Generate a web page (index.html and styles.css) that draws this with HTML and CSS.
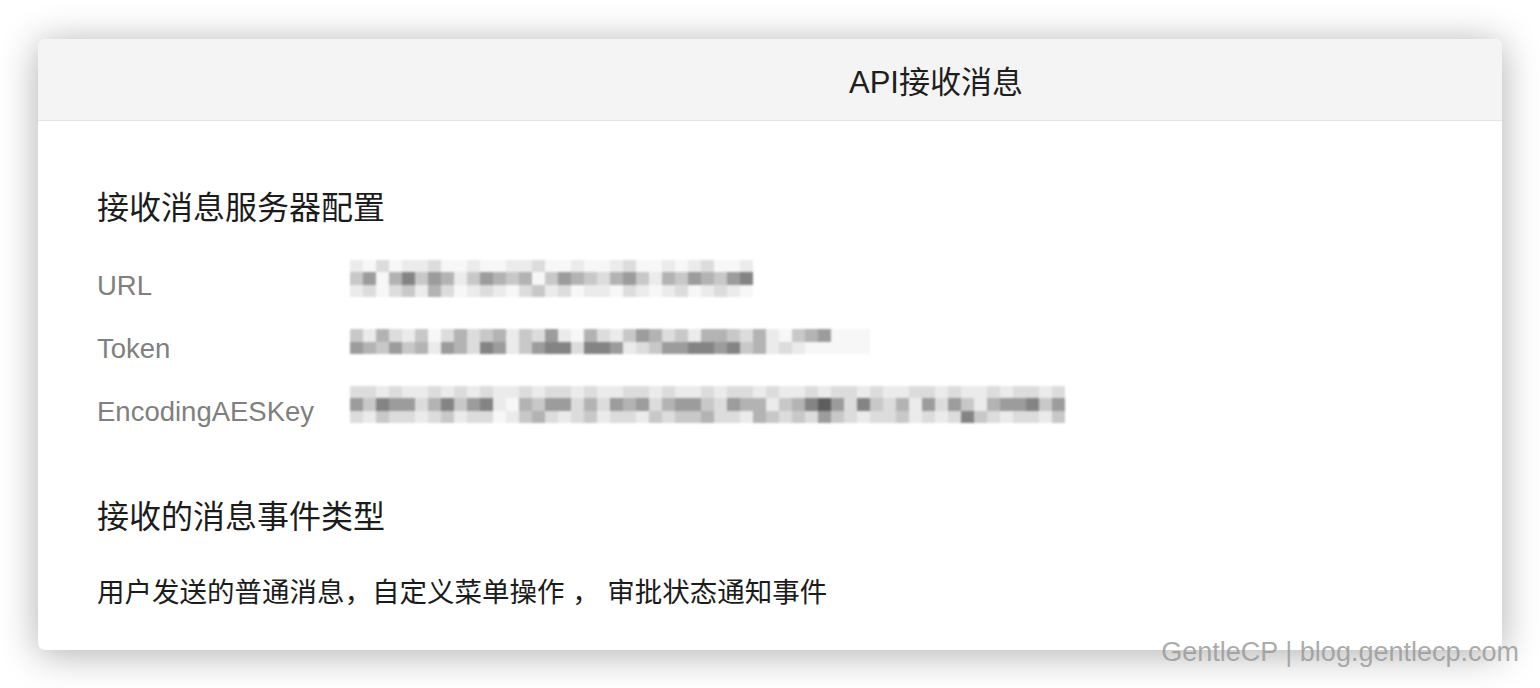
FILE: index.html
```html
<!DOCTYPE html>
<html lang="zh-CN">
<head>
<meta charset="utf-8">
<title>API接收消息</title>
<link rel="stylesheet" href="styles.css">
</head>
<body>
<div class="page">
  <div class="card">
    <div class="card-header">API接收消息</div>
    <div class="card-body">
      <h2 class="section-title">接收消息服务器配置</h2>
      <div class="rows">
        <div class="row">
          <div class="label">URL</div>
          <div class="mosaic">
            <div class="mrow"><i class=s1></i><i class=s0></i><i class=s2></i><i class=s0></i><i class=s1></i><i class=s1></i><i class=s2></i><i class=s0></i><i class=s0></i><i class=s1></i><i class=s0></i><i class=s0></i><i class=s1></i><i class=s1></i><i class=s2></i><i class=s0></i><i class=s0></i><i class=s1></i><i class=s0></i><i class=s0></i><i class=s1></i><i class=s2></i><i class=s0></i><i class=s0></i><i class=s1></i><i class=s0></i><i class=s1></i><i class=s2></i><i class=s0></i><i class=s0></i><i class=s1></i></div>
            <div class="mrow"><i class=s3></i><i class=s5></i><i class=s0></i><i class=s4></i><i class=s6></i><i class=s3></i><i class=s5></i><i class=s4></i><i class=s1></i><i class=s3></i><i class=s5></i><i class=s4></i><i class=s3></i><i class=s4></i><i class=s0></i><i class=s3></i><i class=s5></i><i class=s4></i><i class=s3></i><i class=s2></i><i class=s4></i><i class=s5></i><i class=s3></i><i class=s1></i><i class=s4></i><i class=s3></i><i class=s5></i><i class=s4></i><i class=s3></i><i class=s5></i><i class=s6></i></div>
            <div class="mrow"><i class=s1></i><i class=s2></i><i class=s0></i><i class=s2></i><i class=s3></i><i class=s1></i><i class=s4></i><i class=s2></i><i class=s0></i><i class=s1></i><i class=s2></i><i class=s1></i><i class=s0></i><i class=s2></i><i class=s3></i><i class=s1></i><i class=s2></i><i class=s0></i><i class=s1></i><i class=s1></i><i class=s0></i><i class=s2></i><i class=s1></i><i class=s0></i><i class=s1></i><i class=s2></i><i class=s0></i><i class=s1></i><i class=s2></i><i class=s1></i><i class=s0></i></div>
          </div>
        </div>
        <div class="row">
          <div class="label">Token</div>
          <div class="mosaic">
            <div class="mrow"><i class=s3></i><i class=s1></i><i class=s4></i><i class=s2></i><i class=s1></i><i class=s3></i><i class=s0></i><i class=s2></i><i class=s4></i><i class=s2></i><i class=s3></i><i class=s4></i><i class=s1></i><i class=s3></i><i class=s2></i><i class=s5></i><i class=s1></i><i class=s0></i><i class=s4></i><i class=s2></i><i class=s1></i><i class=s3></i><i class=s5></i><i class=s4></i><i class=s2></i><i class=s3></i><i class=s1></i><i class=s4></i><i class=s4></i><i class=s3></i><i class=s2></i><i class=s4></i><i class=s1></i><i class=s0></i><i class=s3></i><i class=s4></i><i class=s5></i><i class=s0></i><i class=s0></i><i class=s0></i></div>
            <div class="mrow"><i class=s5></i><i class=s4></i><i class=s3></i><i class=s5></i><i class=s3></i><i class=s4></i><i class=s1></i><i class=s5></i><i class=s4></i><i class=s2></i><i class=s6></i><i class=s5></i><i class=s1></i><i class=s3></i><i class=s5></i><i class=s6></i><i class=s6></i><i class=s2></i><i class=s6></i><i class=s6></i><i class=s5></i><i class=s1></i><i class=s2></i><i class=s3></i><i class=s5></i><i class=s5></i><i class=s6></i><i class=s6></i><i class=s5></i><i class=s6></i><i class=s3></i><i class=s4></i><i class=s1></i><i class=s2></i><i class=s1></i><i class=s0></i><i class=s0></i><i class=s0></i><i class=s0></i><i class=s0></i></div>
          </div>
        </div>
        <div class="row">
          <div class="label">EncodingAESKey</div>
          <div class="mosaic">
            <div class="mrow"><i class=s2></i><i class=s2></i><i class=s1></i><i class=s2></i><i class=s1></i><i class=s1></i><i class=s2></i><i class=s1></i><i class=s2></i><i class=s1></i><i class=s2></i><i class=s1></i><i class=s1></i><i class=s2></i><i class=s1></i><i class=s2></i><i class=s2></i><i class=s1></i><i class=s2></i><i class=s1></i><i class=s1></i><i class=s2></i><i class=s2></i><i class=s1></i><i class=s2></i><i class=s1></i><i class=s1></i><i class=s2></i><i class=s1></i><i class=s2></i><i class=s2></i><i class=s1></i><i class=s2></i><i class=s1></i><i class=s1></i><i class=s2></i><i class=s1></i><i class=s2></i><i class=s2></i><i class=s1></i><i class=s2></i><i class=s1></i><i class=s1></i><i class=s2></i><i class=s2></i><i class=s1></i><i class=s2></i><i class=s1></i><i class=s1></i><i class=s2></i><i class=s1></i><i class=s2></i><i class=s2></i><i class=s1></i><i class=s2></i></div>
            <div class="mrow"><i class=s5></i><i class=s3></i><i class=s6></i><i class=s5></i><i class=s5></i><i class=s2></i><i class=s4></i><i class=s6></i><i class=s3></i><i class=s5></i><i class=s6></i><i class=s1></i><i class=s0></i><i class=s4></i><i class=s3></i><i class=s5></i><i class=s5></i><i class=s2></i><i class=s4></i><i class=s2></i><i class=s5></i><i class=s4></i><i class=s5></i><i class=s2></i><i class=s4></i><i class=s5></i><i class=s5></i><i class=s3></i><i class=s2></i><i class=s5></i><i class=s4></i><i class=s4></i><i class=s1></i><i class=s3></i><i class=s4></i><i class=s6></i><i class=s7></i><i class=s5></i><i class=s2></i><i class=s6></i><i class=s3></i><i class=s2></i><i class=s4></i><i class=s1></i><i class=s5></i><i class=s2></i><i class=s5></i><i class=s3></i><i class=s1></i><i class=s4></i><i class=s5></i><i class=s5></i><i class=s6></i><i class=s3></i><i class=s5></i></div>
            <div class="mrow"><i class=s2></i><i class=s1></i><i class=s3></i><i class=s2></i><i class=s2></i><i class=s1></i><i class=s2></i><i class=s3></i><i class=s1></i><i class=s2></i><i class=s2></i><i class=s0></i><i class=s1></i><i class=s3></i><i class=s4></i><i class=s2></i><i class=s1></i><i class=s2></i><i class=s3></i><i class=s1></i><i class=s2></i><i class=s2></i><i class=s1></i><i class=s3></i><i class=s2></i><i class=s3></i><i class=s3></i><i class=s4></i><i class=s2></i><i class=s2></i><i class=s1></i><i class=s4></i><i class=s3></i><i class=s2></i><i class=s3></i><i class=s2></i><i class=s5></i><i class=s3></i><i class=s2></i><i class=s1></i><i class=s2></i><i class=s2></i><i class=s3></i><i class=s1></i><i class=s2></i><i class=s1></i><i class=s2></i><i class=s6></i><i class=s3></i><i class=s2></i><i class=s1></i><i class=s2></i><i class=s2></i><i class=s1></i><i class=s3></i></div>
          </div>
        </div>
      </div>
      <h2 class="section-title second">接收的消息事件类型</h2>
      <p class="desc">用户发送的普通消息，自定义菜单操作 ， 审批状态通知事件</p>
    </div>
  </div>
  <div class="watermark">GentleCP | blog.gentlecp.com</div>
</div>
</body>
</html>
```

FILE: styles.css
```css
* { box-sizing: border-box; }
html, body {
  margin: 0;
  padding: 0;
  background: #ffffff;
  width: 1540px;
  height: 688px;
  overflow: hidden;
}
.page {
  position: relative;
  width: 1540px;
  height: 688px;
  padding: 39px 0 0 38px;
  font-family: "Liberation Sans", "Noto Sans CJK SC", sans-serif;
}
.card {
  width: 1464px;
  height: 611px;
  background: #ffffff;
  border-radius: 7px;
  box-shadow: 0 4px 38px rgba(0, 0, 0, 0.32);
  overflow: hidden;
}
.card-header {
  height: 82px;
  background: #f4f4f4;
  border-bottom: 1px solid #e1e5ea;
  display: flex;
  align-items: center;
  justify-content: center;
  padding-left: 332px;
  font-size: 31px;
  color: #1e1e1e;
}
.card-body {
  padding: 67px 59px 0 59px;
}
.section-title {
  margin: 0;
  font-weight: normal;
  font-size: 32px;
  line-height: 40px;
  color: #1c1c1c;
}
.section-title.second {
  margin-top: 54px;
}
.rows {
  margin-top: 26px;
  display: flex;
  flex-direction: column;
}
.row {
  height: 63px;
  display: flex;
  align-items: center;
}
.label {
  width: 253px;
  font-size: 27.5px;
  color: #808080;
}
.mosaic {
  display: flex;
  flex-direction: column;
  margin-bottom: 14px;
  filter: blur(1.3px);
}
.mrow {
  display: flex;
  height: 12.5px;
}
.mrow i {
  display: block;
  width: 13px;
  height: 100%;
}
.s0 { background: #f7f7f7; }
.s1 { background: #ebebeb; }
.s2 { background: #dcdcdc; }
.s3 { background: #c8c8c8; }
.s4 { background: #b3b3b3; }
.s5 { background: #9c9c9c; }
.s6 { background: #848484; }
.s7 { background: #5e5e5e; }
.desc {
  margin: 38px 0 0 0;
  font-size: 27.5px;
  line-height: 36px;
  color: #1c1c1c;
}
.watermark {
  position: absolute;
  right: 21px;
  top: 637px;
  font-size: 27px;
  color: rgba(150, 150, 150, 0.8);
  font-family: "Liberation Sans", Arial, sans-serif;
}
```
